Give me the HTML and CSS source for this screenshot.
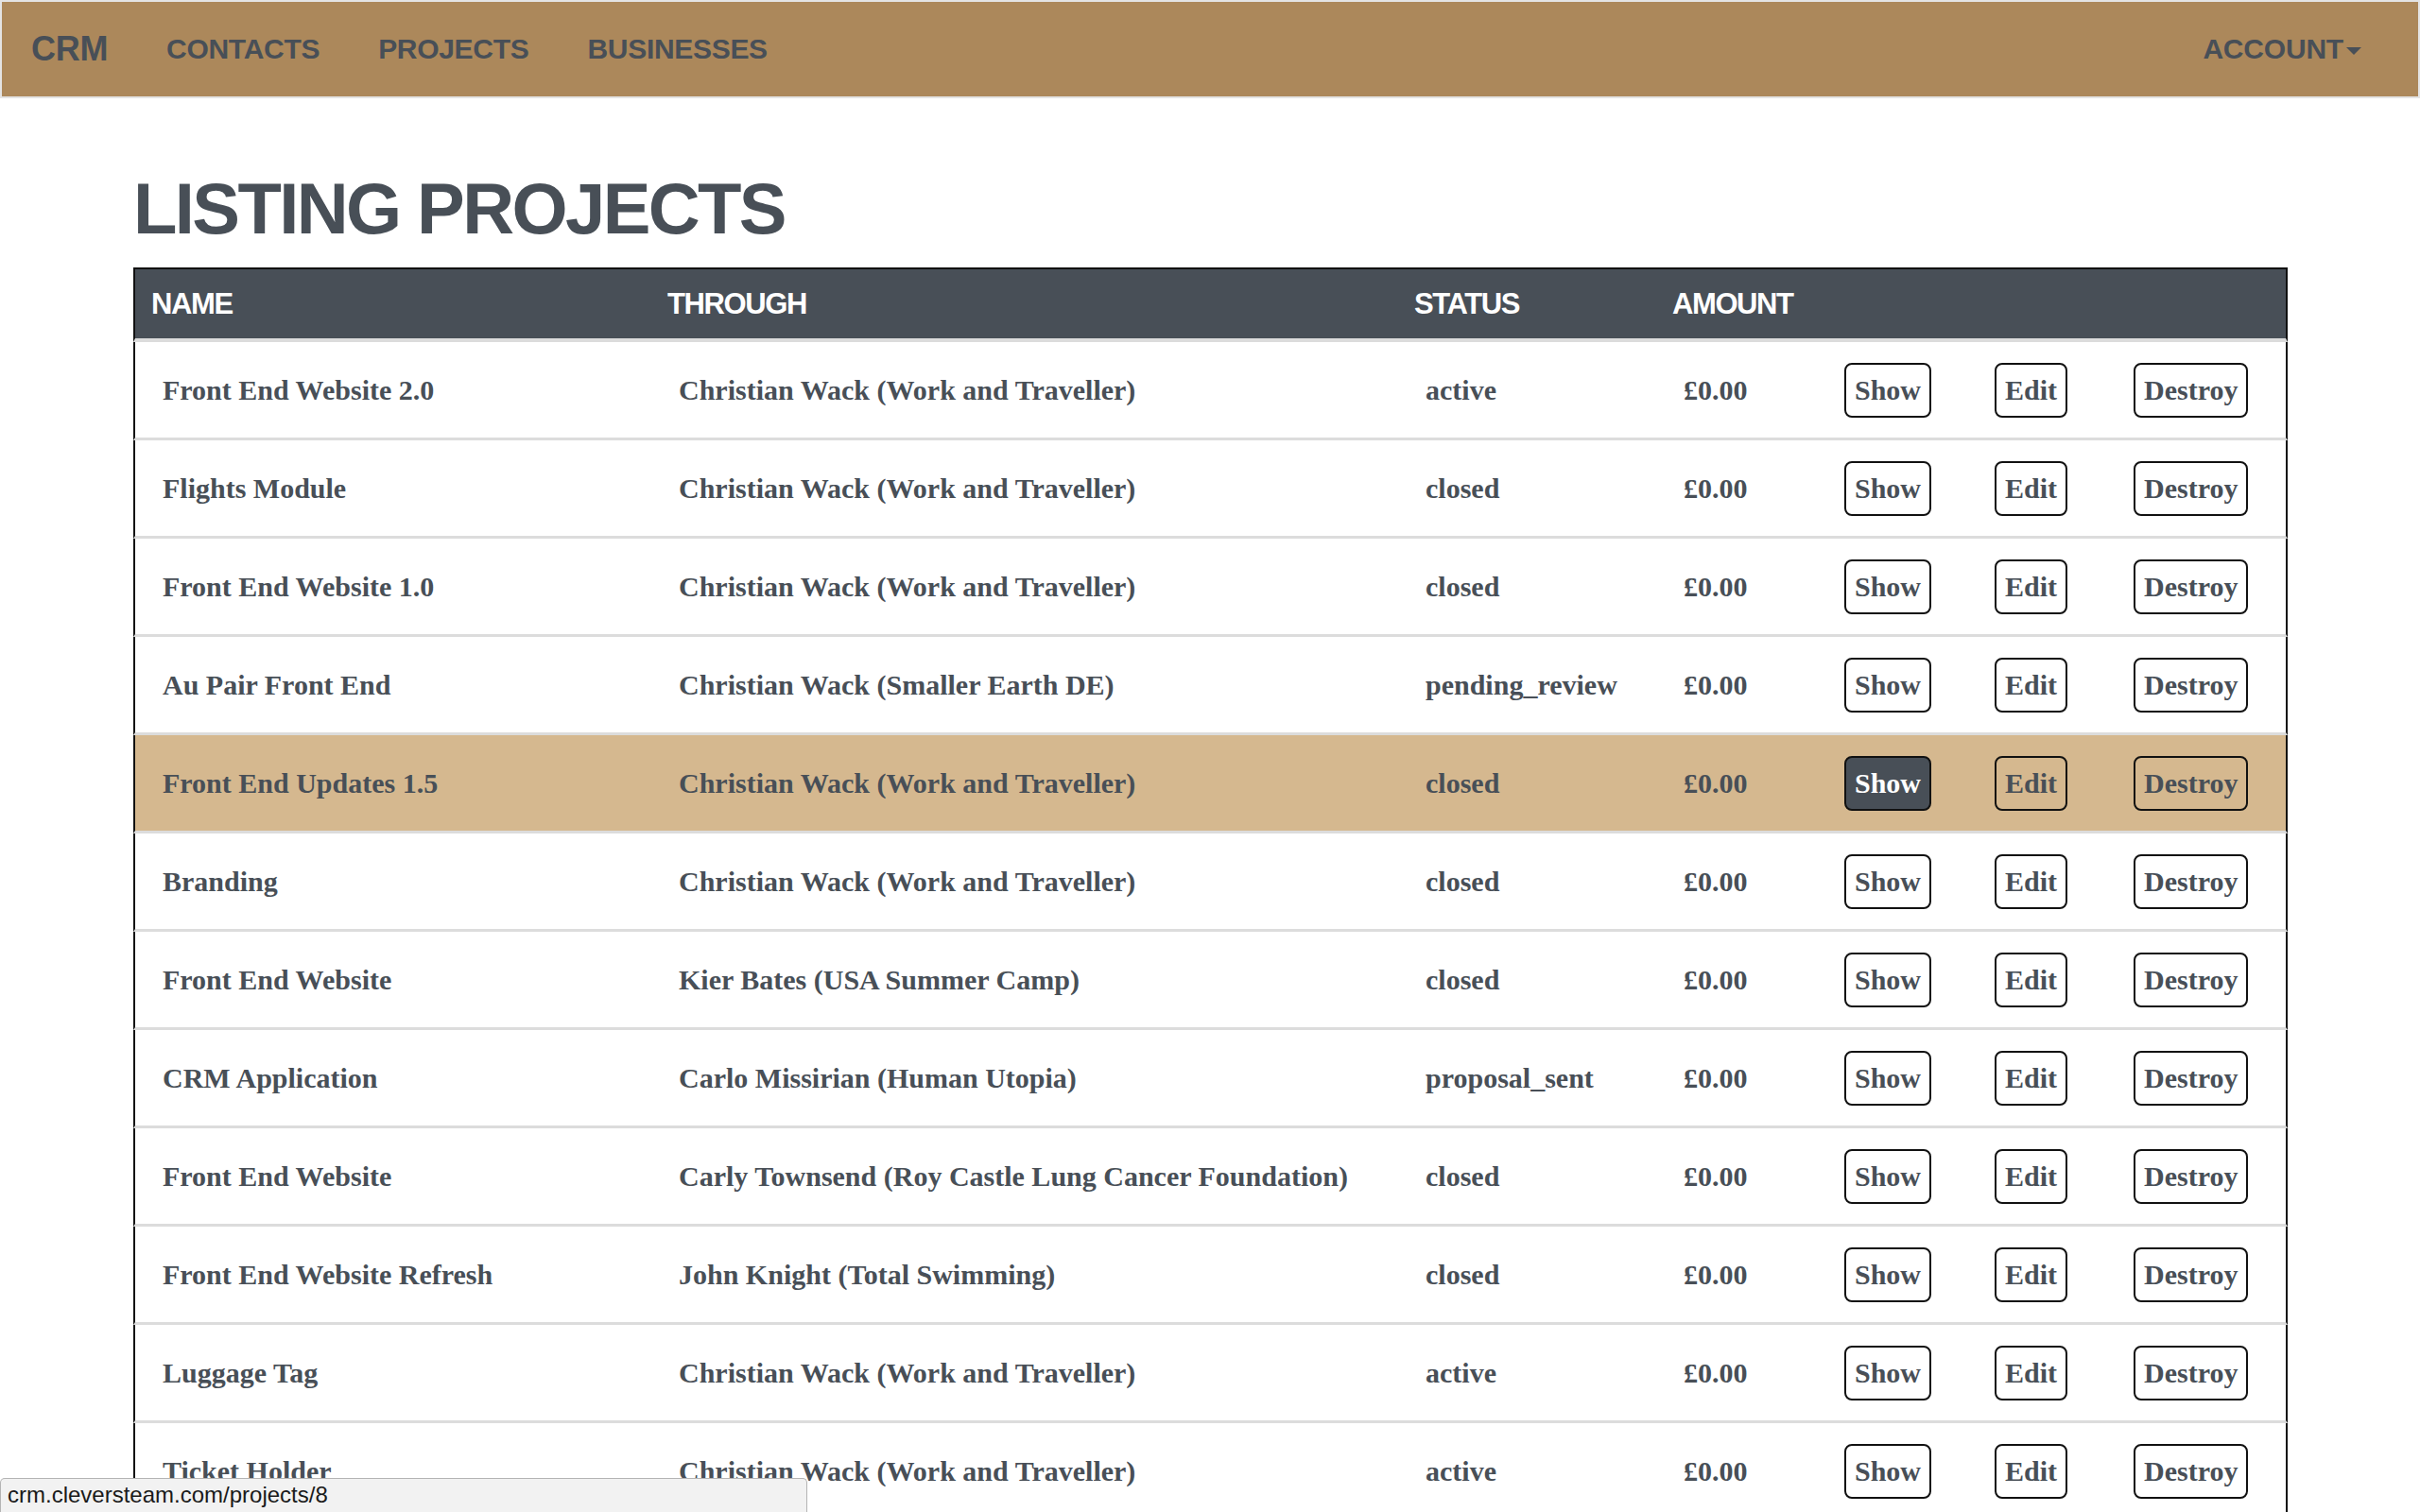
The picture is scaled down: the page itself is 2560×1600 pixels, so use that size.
FILE: index.html
```html
<!DOCTYPE html>
<html lang="en">
<head>
<meta charset="utf-8">
<title>CRM - Listing projects</title>
<link rel="stylesheet" href="styles.css">
</head>
<body>
<nav class="navbar">
  <a class="brand" href="#">CRM</a>
  <a class="nav-link" href="#">CONTACTS</a>
  <a class="nav-link" href="#">PROJECTS</a>
  <a class="nav-link" href="#">BUSINESSES</a>
  <span class="spacer"></span>
  <a class="nav-link account" href="#">ACCOUNT<span class="caret"></span></a>
</nav>
<main class="container">
  <h1 class="title">LISTING PROJECTS</h1>
  <table class="projects">
    <colgroup>
      <col class="c-name"><col class="c-through"><col class="c-status"><col class="c-amount"><col class="c-show"><col class="c-edit"><col class="c-destroy">
    </colgroup>
    <thead>
      <tr><th>NAME</th><th>THROUGH</th><th>STATUS</th><th>AMOUNT</th><th></th><th></th><th></th></tr>
    </thead>
    <tbody>
      <tr><td>Front End Website 2.0</td><td>Christian Wack (Work and Traveller)</td><td>active</td><td>£0.00</td><td><a class="btn" href="#">Show</a></td><td><a class="btn" href="#">Edit</a></td><td><a class="btn" href="#">Destroy</a></td></tr>
      <tr><td>Flights Module</td><td>Christian Wack (Work and Traveller)</td><td>closed</td><td>£0.00</td><td><a class="btn" href="#">Show</a></td><td><a class="btn" href="#">Edit</a></td><td><a class="btn" href="#">Destroy</a></td></tr>
      <tr><td>Front End Website 1.0</td><td>Christian Wack (Work and Traveller)</td><td>closed</td><td>£0.00</td><td><a class="btn" href="#">Show</a></td><td><a class="btn" href="#">Edit</a></td><td><a class="btn" href="#">Destroy</a></td></tr>
      <tr><td>Au Pair Front End</td><td>Christian Wack (Smaller Earth DE)</td><td>pending_review</td><td>£0.00</td><td><a class="btn" href="#">Show</a></td><td><a class="btn" href="#">Edit</a></td><td><a class="btn" href="#">Destroy</a></td></tr>
      <tr class="hover"><td>Front End Updates 1.5</td><td>Christian Wack (Work and Traveller)</td><td>closed</td><td>£0.00</td><td><a class="btn btn-dark" href="#">Show</a></td><td><a class="btn" href="#">Edit</a></td><td><a class="btn" href="#">Destroy</a></td></tr>
      <tr><td>Branding</td><td>Christian Wack (Work and Traveller)</td><td>closed</td><td>£0.00</td><td><a class="btn" href="#">Show</a></td><td><a class="btn" href="#">Edit</a></td><td><a class="btn" href="#">Destroy</a></td></tr>
      <tr><td>Front End Website</td><td>Kier Bates (USA Summer Camp)</td><td>closed</td><td>£0.00</td><td><a class="btn" href="#">Show</a></td><td><a class="btn" href="#">Edit</a></td><td><a class="btn" href="#">Destroy</a></td></tr>
      <tr><td>CRM Application</td><td>Carlo Missirian (Human Utopia)</td><td>proposal_sent</td><td>£0.00</td><td><a class="btn" href="#">Show</a></td><td><a class="btn" href="#">Edit</a></td><td><a class="btn" href="#">Destroy</a></td></tr>
      <tr><td>Front End Website</td><td>Carly Townsend (Roy Castle Lung Cancer Foundation)</td><td>closed</td><td>£0.00</td><td><a class="btn" href="#">Show</a></td><td><a class="btn" href="#">Edit</a></td><td><a class="btn" href="#">Destroy</a></td></tr>
      <tr><td>Front End Website Refresh</td><td>John Knight (Total Swimming)</td><td>closed</td><td>£0.00</td><td><a class="btn" href="#">Show</a></td><td><a class="btn" href="#">Edit</a></td><td><a class="btn" href="#">Destroy</a></td></tr>
      <tr><td>Luggage Tag</td><td>Christian Wack (Work and Traveller)</td><td>active</td><td>£0.00</td><td><a class="btn" href="#">Show</a></td><td><a class="btn" href="#">Edit</a></td><td><a class="btn" href="#">Destroy</a></td></tr>
      <tr><td>Ticket Holder</td><td>Christian Wack (Work and Traveller)</td><td>active</td><td>£0.00</td><td><a class="btn" href="#">Show</a></td><td><a class="btn" href="#">Edit</a></td><td><a class="btn" href="#">Destroy</a></td></tr>
    </tbody>
  </table>
</main>
<div class="statusbar">crm.cleversteam.com/projects/8</div>
</body>
</html>
```

FILE: styles.css
```css
html, body {
  margin: 0;
  padding: 0;
  height: 100vh;
  overflow: hidden;
  background: #ffffff;
}

body {
  font-family: "Liberation Serif", "Times New Roman", serif;
  color: #484f57;
}

a {
  color: inherit;
  text-decoration: none;
}

/* Navbar */
.navbar {
  display: flex;
  align-items: center;
  height: 100px;
  background: #ac885b;
  border: 2px solid #e4e4e4;
  font-family: "Liberation Sans", Arial, sans-serif;
  font-weight: bold;
  color: #484f57;
}

.brand {
  font-size: 36px;
  padding: 0 31px;
  letter-spacing: -0.3px;
}

.nav-link {
  font-size: 30px;
  padding: 0 31px;
  letter-spacing: -0.3px;
}

.spacer {
  flex: 1;
}

.account {
  display: flex;
  align-items: center;
  padding-right: 60px;
  letter-spacing: -0.2px;
}

.caret {
  display: inline-block;
  width: 0;
  height: 0;
  margin-left: 3px;
  margin-top: 4px;
  border-left: 8px solid transparent;
  border-right: 8px solid transparent;
  border-top: 8px solid #484f57;
}

/* Content */
.container {
  padding: 0 140px 0 141px;
}

.title {
  margin: 79px 0 24px 0;
  font-family: "Liberation Sans", Arial, sans-serif;
  font-weight: bold;
  font-size: 76px;
  line-height: 76px;
  letter-spacing: -2.6px;
  color: #484f57;
}

.projects {
  width: 100%;
  table-layout: fixed;
  border-collapse: separate;
  border-spacing: 0;
}

.c-name { width: 548px; }
.c-through { width: 790px; }
.c-status { width: 273px; }
.c-amount { width: 170px; }
.c-show { width: 159px; }
.c-edit { width: 147px; }
.c-destroy { width: 192px; }

.projects th {
  background: #484f57;
  color: #ffffff;
  text-align: left;
  font-family: "Liberation Sans", Arial, sans-serif;
  font-weight: bold;
  font-size: 31px;
  letter-spacing: -1.4px;
  line-height: 73px;
  padding: 0 17px;
  border-top: 2px solid #111111;
  border-bottom: 4px solid #dcdcdc;
  white-space: nowrap;
}

.projects th:first-child {
  border-left: 2px solid #111111;
}

.projects th:last-child {
  border-right: 2px solid #111111;
}

.projects td {
  font-weight: bold;
  font-size: 30px;
  line-height: 101px;
  padding: 0 0 0 29px;
  vertical-align: middle;
  border-bottom: 3px solid #dcdcdc;
  white-space: nowrap;
}

.projects td:first-child {
  border-left: 2px solid #111111;
}

.projects td:last-child {
  border-right: 2px solid #111111;
}

.projects tr.hover td {
  background: #d5b88f;
}

.btn {
  display: inline-block;
  vertical-align: top;
  margin-top: 22px;
  box-sizing: border-box;
  height: 58px;
  line-height: 54px;
  padding: 0 9px;
  border: 2px solid #111111;
  border-radius: 8px;
  font-family: "Liberation Serif", "Times New Roman", serif;
  font-weight: bold;
  font-size: 30px;
  color: #484f57;
  background: transparent;
}

.btn-dark {
  background: #484f57;
  color: #ffffff;
}

/* Browser status bar overlay */
.statusbar {
  position: fixed;
  left: 0;
  bottom: 0;
  box-sizing: border-box;
  width: 854px;
  height: 36px;
  line-height: 34px;
  padding: 0 7px;
  background: #f2f2f2;
  border: 1px solid #b4b4b4;
  border-bottom: none;
  border-radius: 5px 5px 0 0;
  font-family: "Liberation Sans", Arial, sans-serif;
  font-size: 24px;
  color: #1a1a1a;
}
```
